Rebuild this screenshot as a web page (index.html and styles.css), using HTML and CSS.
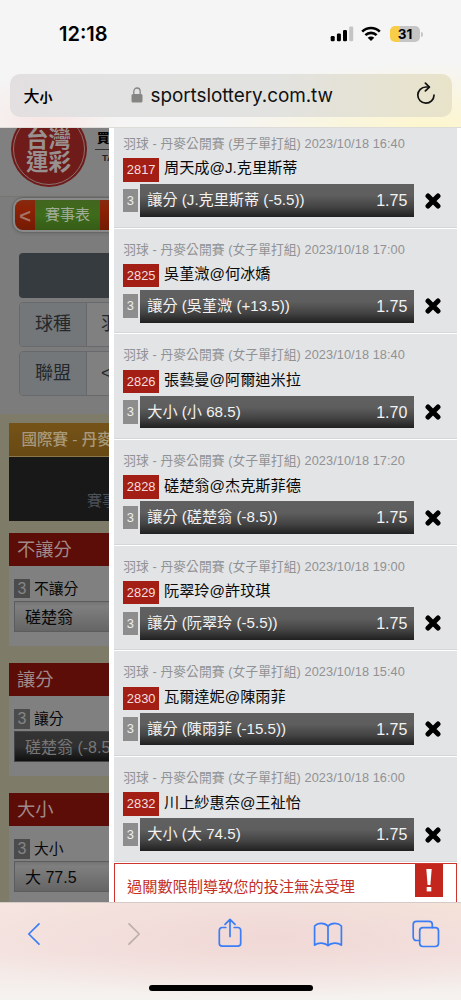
FILE: index.html
```
<!DOCTYPE html>
<html lang="zh-Hant">
<head>
<meta charset="utf-8">
<meta name="viewport" content="width=device-width, initial-scale=1">
<title>台灣運彩</title>
<link rel="stylesheet" href="styles.css">
</head>
<body>
<header class="top">
  <div class="status">
    <span class="clock">12:18</span>
    <div class="indicators">
      <svg class="signal" width="24" height="16" viewBox="0 0 24 16"><g fill="#000"><rect x=".7" y="10" width="4" height="5.3" rx="1.2"/><rect x="6.9" y="7.5" width="4" height="7.8" rx="1.2"/><rect x="13" y="4" width="4" height="11.3" rx="1.2"/></g><rect x="19.2" y=".6" width="4" height="14.7" rx="1.2" fill="#c4c4c4"/></svg>
      <svg class="wifi" width="20" height="16" viewBox="0 0 20 16" fill="none" stroke="#000"><path d="M1.2 5.6C6.2.8 13.8.8 18.8 5.6" stroke-width="2.7"/><path d="M4.4 9.1c3.1-3 8.1-3 11.2 0" stroke-width="2.6"/><path d="M10 15 6.7 11.7c1.9-1.7 4.7-1.7 6.6 0z" fill="#000" stroke="none"/></svg>
      <div class="battery"><span>31</span></div>
      <i class="battery-tip"></i>
    </div>
  </div>
  <div class="address">
    <span class="text-size">大<small>小</small></span>
    <div class="site">
      <svg width="12" height="16" viewBox="0 0 12 16"><path d="M2.8 8V4.6C2.8-.2 9.2-.2 9.2 4.6V8" fill="none" stroke="#858584" stroke-width="1.3"/><rect x=".5" y="7" width="11" height="8.6" rx="1.5" fill="#858584"/></svg>
      <span>sportslottery.com.tw</span>
    </div>
    <svg class="reload" width="20" height="23" viewBox="0 0 20 23" fill="none" stroke="#111" stroke-width="1.7" stroke-linecap="round" stroke-linejoin="round"><path d="M18 13.2A8.1 8.1 0 1 1 10 5h2.8"/><path d="m9.4 1.2 4 3.9-4 3.8"/></svg>
  </div>
</header>

<main class="content">
  <section class="page">
    <div class="brand">
      <div class="seal"><div class="seal-in"><span>台灣</span><span>運彩</span></div></div>
      <div class="slogan"><b>買</b><em>TA</em></div>
    </div>
    <nav class="tabs"><div class="tabs-in"><span class="prev">&lt;</span><span class="tab">賽事表</span></div></nav>
    <div class="filter">
      <div class="filter-head"></div>
      <div class="field"><label>球種</label><span>羽</span></div>
      <div class="field"><label>聯盟</label><span>&lt;</span></div>
    </div>
    <div class="games">
      <div class="league">國際賽 - 丹麥</div>
      <div class="league-body">賽事</div>
      <section class="market"><h2>不讓分</h2><div class="market-body"><p><i>3</i>不讓分</p><div class="odd">磋楚翁</div></div></section>
      <section class="market"><h2>讓分</h2><div class="market-body"><p><i>3</i>讓分</p><div class="odd picked">磋楚翁 (-8.5</div></div></section>
      <section class="market"><h2>大小</h2><div class="market-body"><p><i>3</i>大小</p><div class="odd">大 77.5</div></div></section>
    </div>
  </section>

  <aside class="slip">
    <article class="bet"><p class="meta">羽球 - 丹麥公開賽 (男子單打組) 2023/10/18 16:40</p><div class="match"><b>2817</b><span>周天成@J.克里斯蒂</span></div><div class="pick"><i>3</i><div class="bar"><span>讓分 (J.克里斯蒂 (-5.5))</span><strong>1.75</strong></div><svg class="x" viewBox="0 0 16 16"><path d="m3 3 10 10M13 3 3 13"/></svg></div></article>
    <article class="bet"><p class="meta">羽球 - 丹麥公開賽 (女子單打組) 2023/10/18 17:00</p><div class="match"><b>2825</b><span>吳堇溦@何冰嬌</span></div><div class="pick"><i>3</i><div class="bar"><span>讓分 (吳堇溦 (+13.5))</span><strong>1.75</strong></div><svg class="x" viewBox="0 0 16 16"><path d="m3 3 10 10M13 3 3 13"/></svg></div></article>
    <article class="bet"><p class="meta">羽球 - 丹麥公開賽 (女子單打組) 2023/10/18 18:40</p><div class="match"><b>2826</b><span>張藝曼@阿爾迪米拉</span></div><div class="pick"><i>3</i><div class="bar"><span>大小 (小 68.5)</span><strong>1.70</strong></div><svg class="x" viewBox="0 0 16 16"><path d="m3 3 10 10M13 3 3 13"/></svg></div></article>
    <article class="bet"><p class="meta">羽球 - 丹麥公開賽 (女子單打組) 2023/10/18 17:20</p><div class="match"><b>2828</b><span>磋楚翁@杰克斯菲德</span></div><div class="pick"><i>3</i><div class="bar"><span>讓分 (磋楚翁 (-8.5))</span><strong>1.75</strong></div><svg class="x" viewBox="0 0 16 16"><path d="m3 3 10 10M13 3 3 13"/></svg></div></article>
    <article class="bet"><p class="meta">羽球 - 丹麥公開賽 (女子單打組) 2023/10/18 19:00</p><div class="match"><b>2829</b><span>阮翠玲@許玟琪</span></div><div class="pick"><i>3</i><div class="bar"><span>讓分 (阮翠玲 (-5.5))</span><strong>1.75</strong></div><svg class="x" viewBox="0 0 16 16"><path d="m3 3 10 10M13 3 3 13"/></svg></div></article>
    <article class="bet"><p class="meta">羽球 - 丹麥公開賽 (女子單打組) 2023/10/18 15:40</p><div class="match"><b>2830</b><span>瓦爾達妮@陳雨菲</span></div><div class="pick"><i>3</i><div class="bar"><span>讓分 (陳雨菲 (-15.5))</span><strong>1.75</strong></div><svg class="x" viewBox="0 0 16 16"><path d="m3 3 10 10M13 3 3 13"/></svg></div></article>
    <article class="bet"><p class="meta">羽球 - 丹麥公開賽 (女子單打組) 2023/10/18 16:00</p><div class="match"><b>2832</b><span>川上紗惠奈@王祉怡</span></div><div class="pick"><i>3</i><div class="bar"><span>大小 (大 74.5)</span><strong>1.75</strong></div><svg class="x" viewBox="0 0 16 16"><path d="m3 3 10 10M13 3 3 13"/></svg></div></article>
    <div class="alert"><span>過關數限制導致您的投注無法受理</span><svg width="28" height="33" viewBox="0 0 28 33"><rect width="28" height="33" fill="#c3261c"/><path d="M11.3 5h5.4l-1.3 16h-2.8z" fill="#fff"/><rect x="11.7" y="23" width="4.6" height="4.4" fill="#fff"/></svg></div>
  </aside>
</main>

<footer class="toolbar">
  <div class="actions">
    <svg class="back" width="14" height="24" viewBox="0 0 14 24"><path d="M12 1.8 1.8 12 12 22.2"/></svg>
    <svg class="forward" width="14" height="24" viewBox="0 0 14 24"><path d="M2 1.8 12.2 12 2 22.2"/></svg>
    <svg class="share" width="24" height="30" viewBox="0 0 24 30"><path d="M7.8 9.5H4.2a2.9 2.9 0 0 0-2.9 2.9v12.9a2.9 2.9 0 0 0 2.9 2.9h15.6a2.9 2.9 0 0 0 2.9-2.9V12.4a2.9 2.9 0 0 0-2.9-2.9h-3.6M12 18.5V1.5M7 6.3l5-5 5 5"/></svg>
    <svg class="book" width="30" height="25" viewBox="0 0 30 25"><path d="M15 4.2C11.7.5 5 .4 1.6 4v19.2c3.6-2.9 10.2-2.7 13.4.5 3.2-3.2 9.8-3.4 13.4-.5V4C25 .4 18.3.5 15 4.2zM15 4v19.5"/></svg>
    <svg class="windows" width="28" height="28" viewBox="0 0 28 28"><rect x="7.7" y="7.7" width="18.8" height="18.8" rx="3.2"/><path d="M7.5 20.5H4.4a3.2 3.2 0 0 1-3.2-3.2V4.6a3.2 3.2 0 0 1 3.2-3.2h12.7a3.2 3.2 0 0 1 3.2 3.2v3"/></svg>
  </div>
  <div class="home"></div>
</footer>
</body>
</html>
```

FILE: styles.css
```
* { box-sizing: border-box; }
body {
  margin: 0;
  width: 461px;
  height: 1000px;
  display: flex;
  flex-direction: column;
  overflow: hidden;
  background: #fff;
  font-family: "Liberation Sans", "Noto Sans CJK TC", sans-serif;
}
p, h2 { margin: 0; font-weight: 400; }
i, em { font-style: normal; }
svg { flex: none; display: block; }

/* Browser chrome, top */
.top {
  flex: none;
  height: 128px;
  border-bottom: 1px solid #dddcd8;
  background:
    radial-gradient(ellipse 210px 65px at 430px 128px, #fdf6cd, #fdf6cd00),
    radial-gradient(ellipse 75px 50px at 45px 120px, #f7e6e4, #f7e6e400),
    #f5f5f5;
}
.status {
  height: 74px;
  padding: 18px 38px 0 59px;
  display: flex;
  align-items: flex-start;
  justify-content: space-between;
}
.clock { font: 600 20px/33px Inter, sans-serif; }
.indicators { display: flex; align-items: center; padding-top: 8px; }
.wifi { margin-left: 7px; }
.battery {
  margin-left: 9px;
  width: 30px;
  height: 16px;
  border-radius: 5px;
  background: linear-gradient(90deg, #f8cd48 0 9.5px, #c5c5c5 9.5px);
  font: 700 13.5px/16px Inter, sans-serif;
  text-align: center;
}
.battery-tip { width: 2px; height: 5px; margin-left: 1px; border-radius: 0 2px 2px 0; background: #c5c5c5; }
.address {
  margin: 0 9.5px;
  height: 42.5px;
  border-radius: 10px;
  padding: 0 16px 0 14px;
  display: grid;
  grid-template-columns: 107px 1fr auto;
  align-items: center;
  background: linear-gradient(90deg, #e3dfe0 0, #e2e2e2 20%, #e2e2e0 60%, #e8e3c9);
}
.text-size { padding-top: 1px; font: 500 16px/24px "Noto Sans CJK TC", sans-serif; white-space: nowrap; }
.text-size small { font-size: 13px; font-weight: 700; }
.site { display: flex; align-items: center; gap: 8px; padding-top: 1px; font: 400 18.9px/24px Inter, sans-serif; letter-spacing: -.06px; color: #111; }
.site svg { margin-top: -2px; }
.reload { margin-top: -4px; }

.content { flex: none; height: 774px; display: flex; overflow: hidden; }

/* Dimmed page behind the slip */
.page { width: 109px; flex: none; overflow: hidden; background: #7c7c7c; white-space: nowrap; }
.brand { height: 69px; display: flex; overflow: hidden; background: #808080; border-bottom: 1px solid #777570; }
.seal {
  flex: none;
  width: 76px;
  height: 76px;
  margin: -17.5px 0 0 10.5px;
  border-radius: 50%;
  padding: 2px;
  background: #6e1b19;
}
.seal-in {
  height: 72px;
  border: 1.5px solid #8b7070;
  border-radius: 50%;
  display: flex;
  flex-direction: column;
  align-items: center;
  padding-top: 12px;
  color: #999190;
  font: 700 22.5px/23px "Noto Sans CJK TC", sans-serif;
}
.slogan { margin-left: 8.5px; }
.slogan b { display: block; padding: 3px 0 0 2px; height: 22px; border-bottom: 1.5px solid #333; font: 900 12.5px/14px "Noto Sans CJK TC", sans-serif; }
.slogan em { display: block; padding-left: 7px; font: 700 9.5px/15px "Liberation Sans", sans-serif; color: #222; }
.tabs {
  width: 150px;
  height: 36px;
  margin-left: 12px;
  padding: 2px;
  border: 1px solid #676767;
  border-radius: 11px;
  background: #898989;
  box-shadow: 0 1px 3px #5555;
}
.tabs-in {
  height: 30px;
  display: flex;
  border-radius: 8px;
  overflow: hidden;
  background: linear-gradient(#852a10, #8c2105 30%, #741b04);
  line-height: 30px;
}
.prev { width: 20px; text-align: center; font-size: 20px; font-weight: 700; line-height: 32px; color: #a47162; }
.tab { width: 65px; text-align: center; background: linear-gradient(#42651f, #3e6c1b 50%, #355c16); color: #a2ac98; font-size: 15px; }
.filter { margin: 20px 0 0 19px; width: 200px; }
.filter-head { height: 44.5px; border-radius: 4px; background: #363b40; }
.field { margin-top: 4.7px; height: 44.5px; display: flex; border: 1px solid #67696c; border-radius: 4px; background: #808080; line-height: 43px; font-size: 18px; color: #25282b; overflow: hidden; }
.field label { width: 67px; padding-left: 15px; border-right: 1px solid #67696c; background: #74777a; }
.field span { padding-left: 14px; }
.games { margin-top: 18.5px; padding: 9px 0 0 9px; height: 500px; background: #7e7c68; }
.league { height: 34px; padding-left: 12.5px; border-bottom: 1px solid #8a774a; background: linear-gradient(#755318, #694913); color: #a89a7c; font: 500 15.5px/34px "Liberation Sans", "Noto Sans CJK TC", sans-serif; }
.league-body { height: 63.5px; padding: 34px 0 0 78px; background: #181818; color: #4c5059; font-size: 15px; line-height: 20px; }
.market { margin-top: 12px; height: 113px; background: #808080; }
.market + .market { margin-top: 17.3px; }
.market h2 { height: 33px; padding-left: 8px; background: #5c0d08; color: #a08a88; font-size: 18.3px; line-height: 33px; }
.market-body { padding: 13px 0 0 5px; }
.market p { height: 19.5px; display: flex; gap: 4px; color: #080808; font-size: 14.8px; line-height: 21px; }
.market i { width: 16px; background: #4b4b4b; color: #858585; text-align: center; font-size: 16px; line-height: 20px; }
.odd { margin-top: 2.5px; width: 120px; height: 31px; padding-left: 10px; border: 1px solid #5c5c5c; background: linear-gradient(#747474, #7f7f7f 15%, #656565); color: #080808; font-size: 16px; line-height: 31px; }
.picked { border-color: #444; background: linear-gradient(#343434, #303030 50%, #101010); color: #777; }

/* Bet slip */
.slip {
  flex: 1;
  padding: 0 4.5px 0 5px;
  background: #fff;
  white-space: nowrap;
}
.bet {
  height: 105.7px;
  padding: 12px 0 0 9.3px;
  background: #e3e4e6;
  border-bottom: 1.5px solid #fff;
  box-shadow: inset 0 -1px #d5d6d7;
}
.bet:first-child { margin-top: -5.1px; }
.meta { height: 23.3px; color: #919294; font: 12.75px/18px "Liberation Sans", "Noto Sans CJK TC", sans-serif; letter-spacing: .07px; }
.match { display: flex; align-items: center; height: 23.5px; gap: 5px; color: #090909; font-size: 15.2px; line-height: 22px; }
.match b { width: 35.7px; height: 23.5px; background: #a31e15; color: #f3dfdd; font-size: 12.9px; font-weight: 400; line-height: 23.5px; text-align: center; }
.match span { margin-top: -3px; }
.pick { display: flex; align-items: center; height: 32.7px; margin-top: 2.5px; }
.pick i { width: 14.3px; height: 23.5px; background: #8d8d8d; color: #eee; font-size: 12.9px; line-height: 23px; text-align: center; }
.bar {
  margin-left: 2.2px;
  width: 274.5px;
  height: 32.7px;
  padding: 0 7px 0 7.5px;
  display: flex;
  justify-content: space-between;
  background: linear-gradient(#606060, #5e5e5e 35%, #434343 70%, #202020);
  color: #f2f2f2;
  font-size: 15.15px;
  line-height: 32px;
}
.bar strong { font-weight: 400; font-size: 16px; line-height: 34px; }
.x { width: 16px; height: 16px; margin-left: 10.8px; fill: none; stroke: #000; stroke-width: 5; stroke-linecap: round; }
.alert {
  height: 60px;
  display: flex;
  align-items: flex-start;
  justify-content: space-between;
  padding: 0 12.5px 0 12px;
  border: 1px solid #cc352c;
  background: #fff;
  color: #c42e25;
  font-size: 15.2px;
  line-height: 46px;
}

/* Browser chrome, bottom */
.toolbar {
  flex: none;
  height: 98px;
  padding: 15px 0 0 27px;
  border-top: 1px solid #d5cac8;
  background:
    radial-gradient(ellipse 330px 60px at 270px 35px, #f0d8d6, #f0d8d600),
    radial-gradient(ellipse 200px 30px at 461px 0, #f4e6d8, #f4e6d800),
    linear-gradient(#f5e5df, #f4e4e1 50%, #f5f3f0);
}
.actions { height: 32px; display: flex; align-items: center; fill: none; stroke: #3a7df6; stroke-width: 1.7; stroke-linecap: round; stroke-linejoin: round; }
.forward { stroke: #bcaeac; margin-left: 86px; }
.share { margin-left: 77.3px; margin-top: -2px; }
.book { margin-left: 70.7px; }
.windows { margin-left: 69px; }
.home { width: 164px; height: 6px; margin: 34.5px 0 0 121.5px; border-radius: 3px; background: #000; }
```
